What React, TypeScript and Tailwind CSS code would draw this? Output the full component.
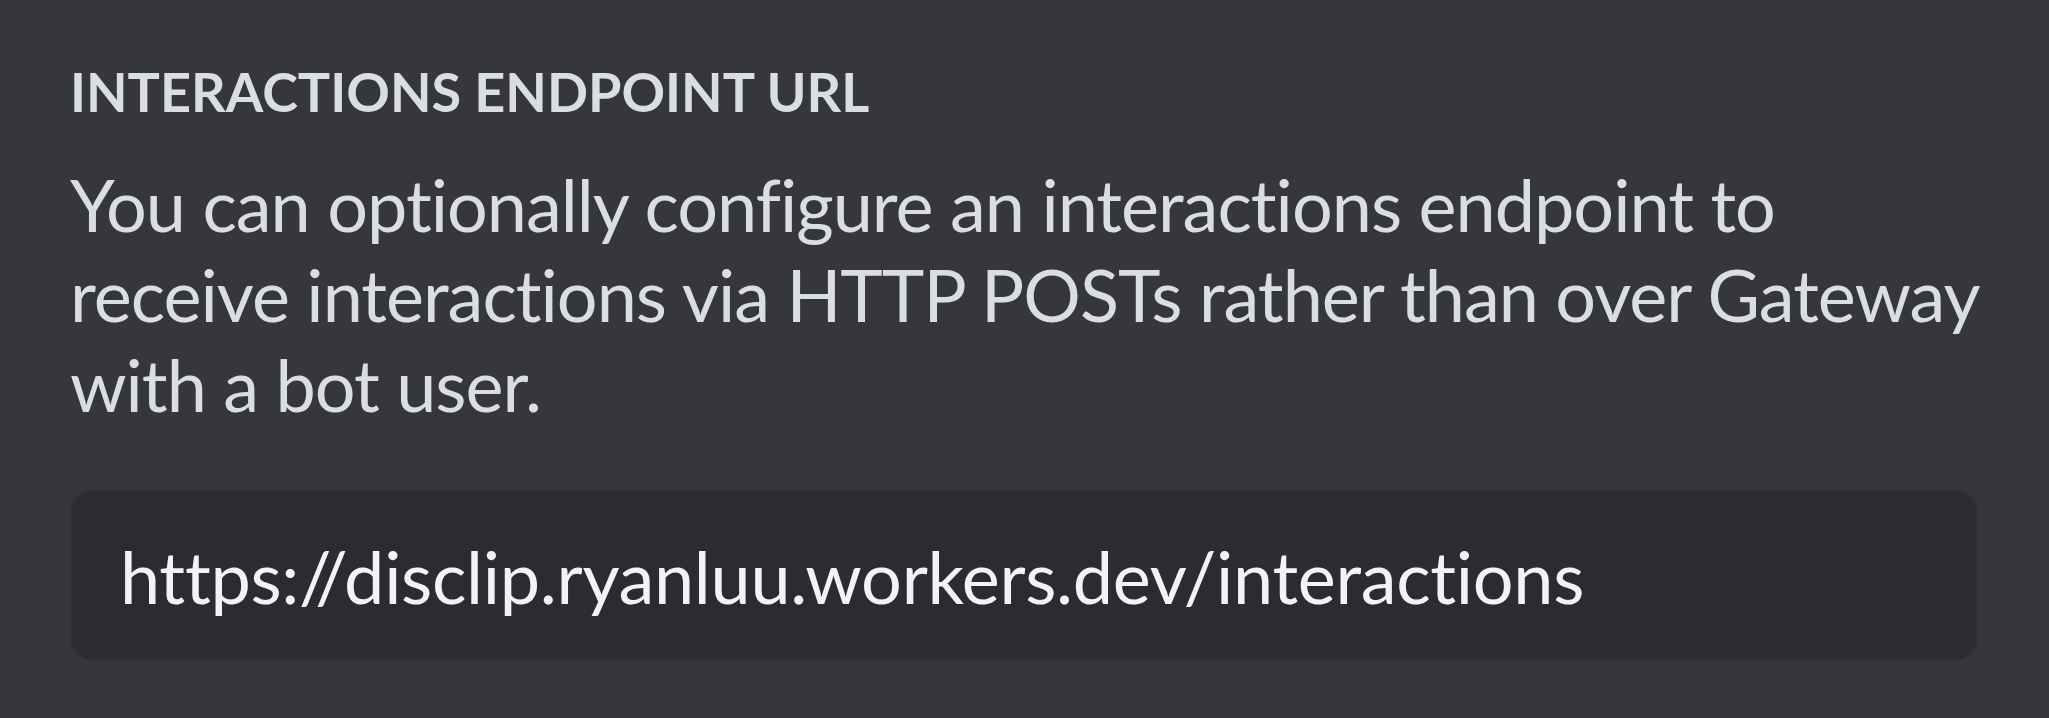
export default function App() {
  return (
    <div className="min-h-screen w-full bg-[#36373d] font-['Lato',sans-serif] [font-variant-ligatures:none]">
      <div className="pt-[56px] pl-[70px] pr-[71px]">
        <h2 className="text-[54px] leading-[72px] font-bold uppercase text-[#dbdee1]">
          Interactions Endpoint URL
        </h2>
        <p className="mt-[31px] text-[72px] leading-[90px] tracking-[-1px] text-[#dbdee1]">
          You can optionally configure an interactions endpoint to receive interactions via HTTP POSTs rather than over
          Gateway with a bot user.
        </p>
        <div className="mt-[61px] h-[171px] flex items-center rounded-[22px] border-[2px] border-[#303136] bg-[#2b2c31] px-[48px]">
          <span className="text-[72px] tracking-[-0.3px] text-[#f2f3f5]">https://disclip.ryanluu.workers.dev/interactions</span>
        </div>
      </div>
    </div>
  )
}
